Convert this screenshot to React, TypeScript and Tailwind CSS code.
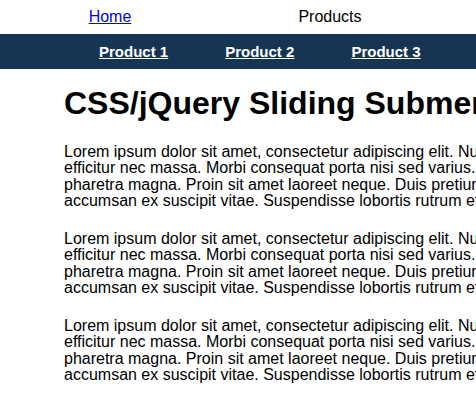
const lines = [
  "Lorem ipsum dolor sit amet, consectetur adipiscing elit. Nulla facilisi. Vivamus vitae mauris",
  "efficitur nec massa. Morbi consequat porta nisi sed varius. Nam euismod, lacus non",
  "pharetra magna. Proin sit amet laoreet neque. Duis pretium, metus vel finibus tincidunt,",
  "accumsan ex suscipit vitae. Suspendisse lobortis rutrum efficitur.",
];

const App = () => {
  return (
    <div className="w-[476px] h-[400px] overflow-hidden bg-white text-black font-['Liberation_Sans',Arial,sans-serif]">
      <div className="w-[960px]">
        {/* top nav  */}
        <div className="flex h-[34px] items-center text-[16px]">
          <div className="w-[220px] text-center">
            <a href="#" className="text-[#0000ee] underline">
              Home
            </a>
          </div>
          <div className="w-[220px] text-center">Products</div>
        </div>

        {/* submenu  */}
        <div className="flex h-[35px] items-center gap-[57px] bg-[#163553] pl-[99px] pt-[2px] text-[15px] font-bold text-white">
          <a href="#" className="underline">
            Product 1
          </a>
          <a href="#" className="underline">
            Product 2
          </a>
          <a href="#" className="underline">
            Product 3
          </a>
        </div>

        {/* content  */}
        <div className="pl-[64px]">
          <h1 className="mt-[16px] text-[32px] leading-[37px] font-bold">
            CSS/jQuery Sliding Submenu
          </h1>
          {[0, 1, 2].map((i) => (
            <p key={i} className="mt-[22px] text-[16px] leading-[16.25px] whitespace-nowrap">
              {lines.map((l, j) => (
                <span key={j} className="block">
                  {l}
                </span>
              ))}
            </p>
          ))}
        </div>
      </div>
    </div>
  );
};

export default App;
